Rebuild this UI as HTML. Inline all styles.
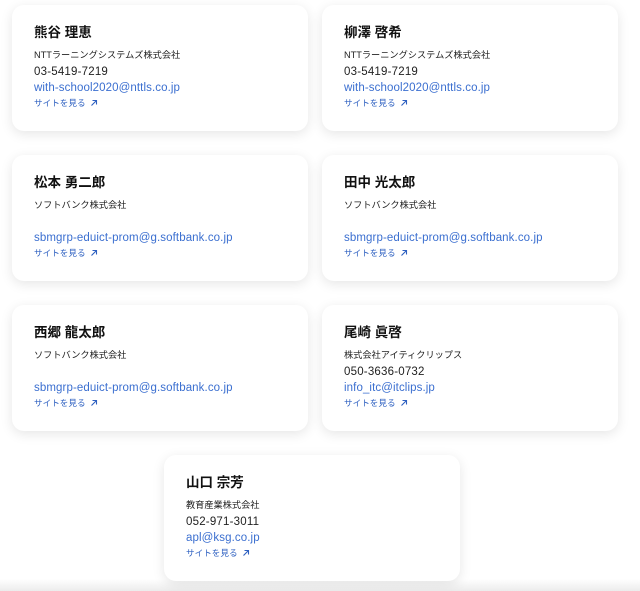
<!DOCTYPE html>
<html><head><meta charset="utf-8"><style>
html,body{margin:0;padding:0;background:#fff;width:640px;height:591px;overflow:hidden;position:relative;font-family:"Liberation Sans","Noto Sans CJK JP",sans-serif;}
.c{position:absolute;width:296px;height:126px;background:#fff;border-radius:12px;box-shadow:0 3px 12px rgba(0,0,0,0.10);box-sizing:border-box;}
.c div{line-height:1;white-space:nowrap}
.n{position:absolute;left:22px;top:21px;font-size:13.5px;font-weight:bold;color:#111;}
.co{position:absolute;left:22px;top:46px;font-size:9.2px;color:#222;}
.ph{position:absolute;left:22px;top:62px;font-size:11.5px;color:#222;letter-spacing:0.2px;}
.em{position:absolute;left:22px;top:78px;font-size:11.5px;color:#3b6fd0;letter-spacing:0.1px;}
.ln{position:absolute;left:22px;top:94px;font-size:8.6px;color:#2c5fc0;}
.ln svg{vertical-align:-1px;margin-left:4px}
.bot{position:absolute;left:0;right:0;bottom:0;height:12px;background:linear-gradient(#fff,#ececec);}
</style></head><body>
<div class="bot"></div>
<div class="c" style="left:12px;top:5px"><div class="n">熊谷 理恵</div><div class="co">NTTラーニングシステムズ株式会社</div><div class="ph">03-5419-7219</div><div class="em">with-school2020@nttls.co.jp</div><div class="ln">サイトを見る<svg width="8" height="8" viewBox="0 0 8 8"><path d="M1.5 6.5L6.5 1.5M2.5 1.5H6.5V5.5" stroke="#2c5fc0" stroke-width="1.1" fill="none"/></svg></div></div>
<div class="c" style="left:322px;top:5px"><div class="n">柳澤 啓希</div><div class="co">NTTラーニングシステムズ株式会社</div><div class="ph">03-5419-7219</div><div class="em">with-school2020@nttls.co.jp</div><div class="ln">サイトを見る<svg width="8" height="8" viewBox="0 0 8 8"><path d="M1.5 6.5L6.5 1.5M2.5 1.5H6.5V5.5" stroke="#2c5fc0" stroke-width="1.1" fill="none"/></svg></div></div>
<div class="c" style="left:12px;top:155px"><div class="n">松本 勇二郎</div><div class="co">ソフトバンク株式会社</div><div class="em">sbmgrp-eduict-prom@g.softbank.co.jp</div><div class="ln">サイトを見る<svg width="8" height="8" viewBox="0 0 8 8"><path d="M1.5 6.5L6.5 1.5M2.5 1.5H6.5V5.5" stroke="#2c5fc0" stroke-width="1.1" fill="none"/></svg></div></div>
<div class="c" style="left:322px;top:155px"><div class="n">田中 光太郎</div><div class="co">ソフトバンク株式会社</div><div class="em">sbmgrp-eduict-prom@g.softbank.co.jp</div><div class="ln">サイトを見る<svg width="8" height="8" viewBox="0 0 8 8"><path d="M1.5 6.5L6.5 1.5M2.5 1.5H6.5V5.5" stroke="#2c5fc0" stroke-width="1.1" fill="none"/></svg></div></div>
<div class="c" style="left:12px;top:305px"><div class="n">西郷 龍太郎</div><div class="co">ソフトバンク株式会社</div><div class="em">sbmgrp-eduict-prom@g.softbank.co.jp</div><div class="ln">サイトを見る<svg width="8" height="8" viewBox="0 0 8 8"><path d="M1.5 6.5L6.5 1.5M2.5 1.5H6.5V5.5" stroke="#2c5fc0" stroke-width="1.1" fill="none"/></svg></div></div>
<div class="c" style="left:322px;top:305px"><div class="n">尾崎 眞啓</div><div class="co">株式会社アイティクリップス</div><div class="ph">050-3636-0732</div><div class="em">info_itc@itclips.jp</div><div class="ln">サイトを見る<svg width="8" height="8" viewBox="0 0 8 8"><path d="M1.5 6.5L6.5 1.5M2.5 1.5H6.5V5.5" stroke="#2c5fc0" stroke-width="1.1" fill="none"/></svg></div></div>
<div class="c" style="left:164px;top:455px"><div class="n">山口 宗芳</div><div class="co">教育産業株式会社</div><div class="ph">052-971-3011</div><div class="em">apl@ksg.co.jp</div><div class="ln">サイトを見る<svg width="8" height="8" viewBox="0 0 8 8"><path d="M1.5 6.5L6.5 1.5M2.5 1.5H6.5V5.5" stroke="#2c5fc0" stroke-width="1.1" fill="none"/></svg></div></div>
</body></html>
